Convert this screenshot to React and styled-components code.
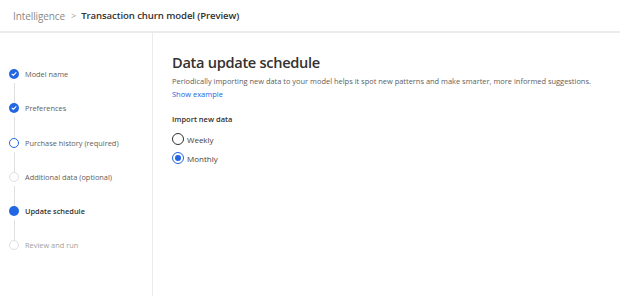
import React from 'react';
import styled, { createGlobalStyle } from 'styled-components';

const GlobalStyle = createGlobalStyle`
  html, body {
    margin: 0;
    padding: 0;
    background: #fff;
  }
  body {
    font-family: "Open Sans", "Noto Sans", sans-serif;
    color: #323130;
  }
`;

const steps = [
  { label: 'Model name', state: 'done' },
  { label: 'Preferences', state: 'done' },
  { label: 'Purchase history (required)', state: 'ring' },
  { label: 'Additional data (optional)', state: 'todo' },
  { label: 'Update schedule', state: 'active' },
  { label: 'Review and run', state: 'todo', faded: true },
];

const App = () => {
  return (
    <Page>
      <GlobalStyle />
      <Header>
        <Crumb>Intelligence</Crumb>
        <Chevron>&gt;</Chevron>
        <CrumbTitle>Transaction churn model (Preview)</CrumbTitle>
      </Header>
      <Body>
        <Sidebar>
          {steps.map((step, idx) => (
            <Step key={idx}>
              <Marker>
                <Dot state={step.state}>
                  {step.state === 'done' && (
                    <svg width="6" height="6" viewBox="0 0 6 6">
                      <path d="M1 3.1 L2.4 4.4 L5 1.6" fill="none" stroke="#fff" strokeWidth="1.1" strokeLinecap="round" strokeLinejoin="round" />
                    </svg>
                  )}
                </Dot>
                {idx < steps.length - 1 && <Connector />}
              </Marker>
              <StepLabel state={step.state} faded={step.faded}>{step.label}</StepLabel>
            </Step>
          ))}
        </Sidebar>
        <Main>
          <Title>Data update schedule</Title>
          <Description>
            Periodically importing new data to your model helps it spot new patterns and make smarter, more informed suggestions.
          </Description>
          <Link>Show example</Link>
          <FieldLabel>Import new data</FieldLabel>
          <RadioGroup>
            <RadioRow>
              <Radio />
              <RadioText>Weekly</RadioText>
            </RadioRow>
            <RadioRow>
              <Radio checked />
              <RadioText>Monthly</RadioText>
            </RadioRow>
          </RadioGroup>
        </Main>
      </Body>
    </Page>
  );
};

const Page = styled.div`
  width: 620px;
  height: 296px;
  display: flex;
  flex-direction: column;
  overflow: hidden;
`;

const Header = styled.div`
  height: 31px;
  display: flex;
  align-items: center;
  padding-left: 13px;
  border-bottom: 2px solid #ebebeb;
  flex-shrink: 0;
`;

const Crumb = styled.span`
  font-size: 10px;
  color: #8a8886;
  letter-spacing: -0.1px;
`;

const Chevron = styled.span`
  font-size: 9px;
  color: #a19f9d;
  margin: 0 5px 0 6px;
`;

const CrumbTitle = styled.span`
  font-size: 9.6px;
  font-weight: 600;
  color: #323130;
  letter-spacing: -0.1px;
`;

const Body = styled.div`
  flex: 1;
  display: flex;
`;

const Sidebar = styled.div`
  width: 153px;
  border-right: 1px solid #ebebeb;
  padding: 36px 0 0 9px;
  box-sizing: border-box;
  display: flex;
  flex-direction: column;
`;

const Step = styled.div`
  height: 34.3px;
  display: flex;
  gap: 6px;
`;

const Marker = styled.div`
  width: 10px;
  display: flex;
  flex-direction: column;
  align-items: center;
`;

const Dot = styled.div`
  width: 10px;
  height: 10px;
  box-sizing: border-box;
  border-radius: 50%;
  display: flex;
  align-items: center;
  justify-content: center;
  flex-shrink: 0;
  background: ${(p) => (p.state === 'done' || p.state === 'active' ? '#2266e3' : '#fff')};
  border: ${(p) =>
    p.state === 'ring' ? '1.5px solid #2266e3' : p.state === 'todo' ? '1px solid #e1dfdd' : 'none'};
`;

const Connector = styled.div`
  width: 1px;
  flex: 1;
  background: #e1dfdd;
  margin: 4px 0 -1px;
`;

const StepLabel = styled.span`
  font-size: 7.4px;
  line-height: 10px;
  white-space: nowrap;
  font-weight: ${(p) => (p.state === 'active' ? 600 : 400)};
  color: ${(p) => (p.state === 'active' ? '#323130' : p.faded ? '#a19f9d' : '#605e5c')};
`;

const Main = styled.div`
  flex: 1;
  padding: 18px 0 0 19px;
  display: flex;
  flex-direction: column;
`;

const Title = styled.h1`
  margin: 0;
  font-size: 14.6px;
  line-height: 22px;
  font-weight: 600;
  letter-spacing: -0.3px;
  color: #323130;
`;

const Description = styled.p`
  margin: 2px 0 0;
  font-size: 7.45px;
  line-height: 13px;
  color: #605e5c;
  white-space: nowrap;
`;

const Link = styled.a`
  font-size: 7.5px;
  line-height: 13px;
  color: #2266e3;
  cursor: pointer;
`;

const FieldLabel = styled.div`
  margin-top: 12px;
  font-size: 7.5px;
  line-height: 13px;
  font-weight: 600;
  color: #323130;
`;

const RadioGroup = styled.div`
  margin-top: 7px;
  display: flex;
  flex-direction: column;
  gap: 7px;
`;

const RadioRow = styled.label`
  display: flex;
  align-items: center;
  gap: 3px;
  height: 12px;
`;

const Radio = styled.span`
  width: 12px;
  height: 12px;
  box-sizing: border-box;
  border-radius: 50%;
  border: 1px solid ${(p) => (p.checked ? '#2266e3' : '#323130')};
  display: flex;
  align-items: center;
  justify-content: center;
  &::after {
    content: '';
    width: 6px;
    height: 6px;
    border-radius: 50%;
    background: ${(p) => (p.checked ? '#2266e3' : 'transparent')};
  }
`;

const RadioText = styled.span`
  font-size: 8px;
  color: #424242;
`;

export default App;
